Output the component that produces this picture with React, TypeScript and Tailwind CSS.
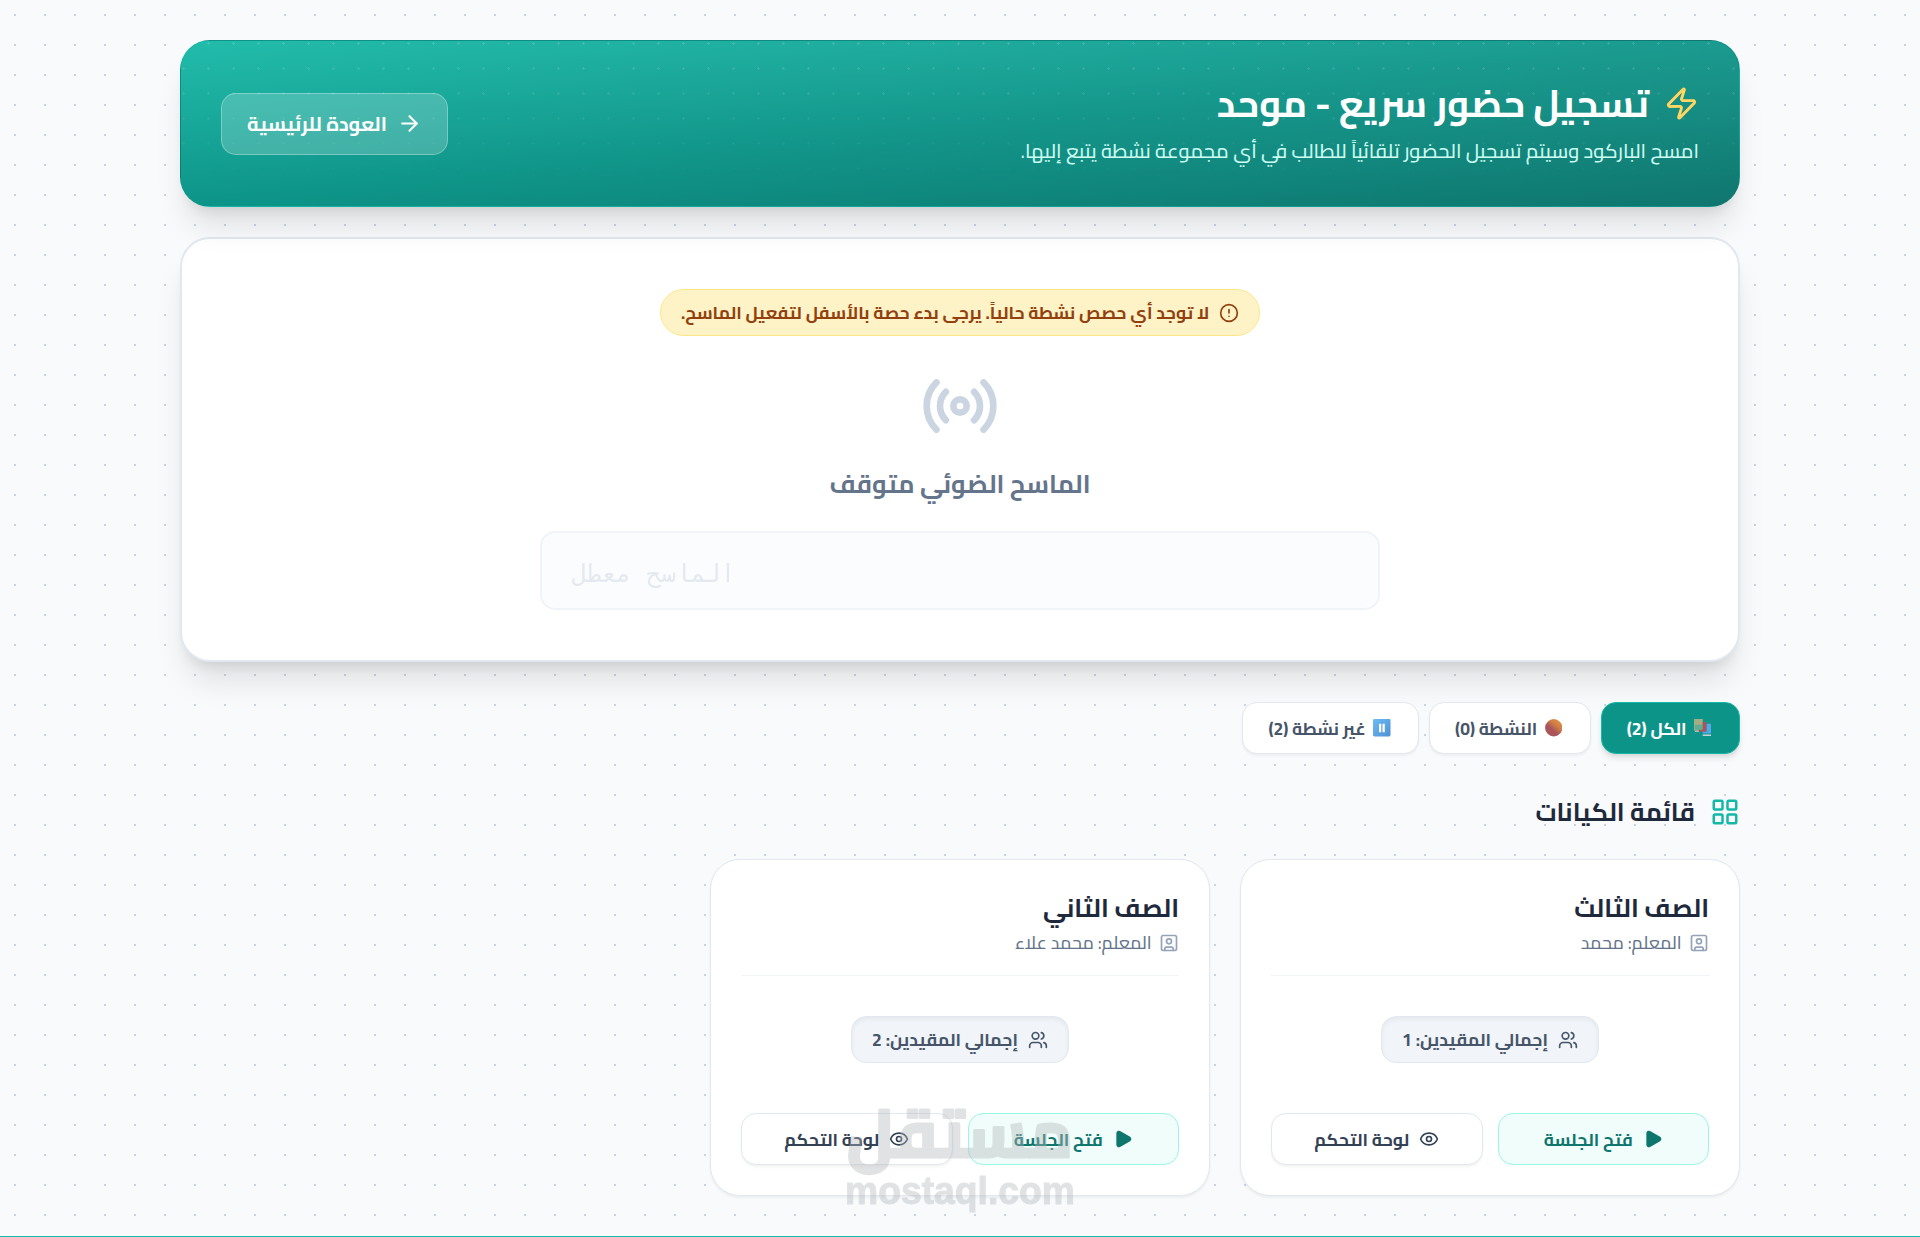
import type { ReactNode } from 'react';
import { ArrowRight, CircleAlert, Eye, LayoutGrid, Play, Radio, SquareUser, Users, Zap } from 'lucide-react';

function BooksEmoji() {
  return (
    <svg viewBox="0 0 18 18" className="ms-0.5 h-3.5 w-3.5 shrink-0">
      <rect x="0" y="0" width="9" height="12" fill="#a3ad84" />
      <rect x="1" y="6" width="8" height="5" fill="#5fae94" />
      <path d="M9 3h4v10H5v-2h4z" fill="#a9545c" />
      <path d="M13 5h4.5v10H9v-2h4z" fill="#53a8ea" />
      <path d="M1 12h4v1H1zM9 16h8.5v1.5H9z" fill="#c9d3d8" />
    </svg>
  );
}

function BallEmoji() {
  return (
    <svg viewBox="0 0 18 18" className="ms-0.5 h-3.5 w-3.5 shrink-0">
      <defs>
        <linearGradient id="ball" x1="0.85" y1="0.1" x2="0.35" y2="0.7">
          <stop offset="0" stopColor="#e09040" />
          <stop offset="0.45" stopColor="#cf7c48" />
          <stop offset="0.85" stopColor="#a9555a" />
        </linearGradient>
      </defs>
      <circle cx="9" cy="9" r="8.9" fill="url(#ball)" />
    </svg>
  );
}

function PauseEmoji() {
  return (
    <svg viewBox="0 0 18 18" className="ms-0.5 h-3.5 w-3.5 shrink-0">
      <defs>
        <linearGradient id="pause" x1="0" y1="0" x2="1" y2="1">
          <stop offset="0" stopColor="#6bbcf5" />
          <stop offset="1" stopColor="#508fd4" />
        </linearGradient>
      </defs>
      <rect width="18" height="18" rx="1.5" fill="url(#pause)" />
      <path d="M6.2 4.8h2.3v8.8H6.2zM9.8 4.8h2.3v8.8H9.8z" fill="#fff" />
    </svg>
  );
}

function Tab({ icon, label, active = false }: { icon: ReactNode; label: string; active?: boolean }) {
  return (
    <button
      className={
        'flex items-center gap-1.5 rounded-xl border px-5 py-2.5 text-sm font-bold ' +
        (active
          ? 'border-[#14b8a6] bg-[#0d9488] text-white shadow-md'
          : 'border-[#e2e8f0] bg-white text-[#475569] shadow-[0_1px_2px_rgba(0,0,0,0.05)]')
      }
    >
      {icon}
      <span>{label}</span>
    </button>
  );
}

function ClassCard({ name, teacher, count }: { name: string; teacher: string; count: number }) {
  return (
    <article className="rounded-3xl border border-[#e2e8f0] bg-white p-6 shadow-[0_1px_2px_rgba(0,0,0,0.05)]">
      <div className="border-b border-[#f1f5f9] pb-4">
        <h3 className="text-xl font-bold text-[#1e293b]">{name}</h3>
        <p className="mt-1 flex items-center gap-1.5 text-sm font-medium text-[#64748b]">
          <SquareUser size={16} className="text-[#94a3b8]" />
          <span>المعلم: {teacher}</span>
        </p>
      </div>
      <div className="mt-8 mb-10 flex justify-center">
        <div className="flex items-center gap-2 rounded-xl border border-[#e2e8f0] bg-[#f1f5f9] px-4 py-2 text-sm font-bold text-[#475569] shadow-[inset_0_2px_4px_rgba(0,0,0,0.05)]">
          <Users size={16} />
          <span>إجمالي المقيدين: {count}</span>
        </div>
      </div>
      <div className="grid grid-cols-2 gap-3">
        <button className="flex items-center justify-center gap-2 rounded-xl border border-[#99f6e4] bg-[#f0fdfa] py-2.5 text-sm font-bold text-[#0f766e]">
          <Play size={16} fill="currentColor" />
          <span>فتح الجلسة</span>
        </button>
        <button className="flex items-center justify-center gap-2 rounded-xl border border-[#e2e8f0] bg-white py-2.5 text-sm font-bold text-[#334155] shadow-[0_1px_2px_rgba(0,0,0,0.05)]">
          <Eye size={16} />
          <span>لوحة التحكم</span>
        </button>
      </div>
    </article>
  );
}

function Watermark() {
  return (
    <svg
      viewBox="0 0 240 125"
      direction="ltr"
      className="pointer-events-none absolute top-[876px] left-[672px] h-[100px] w-[192px] overflow-visible opacity-40"
      fill="#b4b8bb"
      stroke="#b4b8bb"
      strokeLinejoin="round"
    >
      <text
        x="120"
        y="62"
        textAnchor="middle"
        textLength="226"
        lengthAdjust="spacingAndGlyphs"
        strokeWidth="3"
        className="font-['Cairo'] text-[66px] font-bold"
      >
        مستقل
      </text>
      <text
        x="120"
        y="108.5"
        textAnchor="middle"
        textLength="230"
        lengthAdjust="spacingAndGlyphs"
        strokeWidth="1"
        className="font-['Liberation_Sans'] text-[38px] font-bold"
      >
        mostaql.com
      </text>
    </svg>
  );
}

export default function App() {
  return (
    <div
      dir="rtl"
      className="relative flex h-[989.6px] flex-col overflow-hidden bg-[#f8fafc] bg-[radial-gradient(#cbd5e1_1px,transparent_1px)] bg-[length:24px_24px] font-['Cairo',sans-serif] text-[#1e293b] [zoom:1.25]"
    >
      <main className="mx-auto w-full max-w-7xl flex-1 px-4 pt-8">
        <header className="relative mb-6 overflow-hidden rounded-3xl border border-transparent bg-linear-to-br from-[#14b8a6] via-[#0d9488] to-[#0f766e] p-8 shadow-xl">
          <div className="absolute inset-0 bg-[radial-gradient(circle_at_2px_2px,rgba(255,255,255,0.15)_1px,transparent_0)] mask-b-from-0% mask-b-to-90% bg-[length:20px_20px]" />
          <div className="absolute inset-0 bg-linear-to-b from-white/6 to-transparent" />
          <div className="relative flex items-center justify-between">
            <div>
              <h1 className="mb-2 flex items-center gap-3 text-3xl font-bold text-white">
                <Zap size={28} className="text-[#fdd663]" />
                <span>تسجيل حضور سريع - موحد</span>
              </h1>
              <p className="text-base font-medium text-[#ccfbf1]">
                امسح الباركود وسيتم تسجيل الحضور تلقائياً للطالب في أي مجموعة نشطة يتبع إليها.
              </p>
            </div>
            <button className="flex items-center gap-2 rounded-xl border border-white/30 bg-white/20 px-5 py-3 text-base font-bold text-white">
              <ArrowRight size={20} />
              <span>العودة للرئيسية</span>
            </button>
          </div>
        </header>

        <section className="mb-8 flex flex-col items-center rounded-3xl border-2 border-[#e2e8f0] bg-white p-10 shadow-xl">
          <div className="mb-6 flex items-center gap-2 rounded-full border border-[#fde68a] bg-[#fef3c7] px-4 py-2 text-sm font-bold text-[#92400e]">
            <CircleAlert size={16} />
            <span>لا توجد أي حصص نشطة حالياً. يرجى بدء حصة بالأسفل لتفعيل الماسح.</span>
          </div>
          <Radio size={64} className="mb-4 text-[#cbd5e1]" />
          <h2 className="mb-6 text-xl font-bold text-[#64748b]">الماسح الضوئي متوقف</h2>
          <div
            dir="ltr"
            className="w-full max-w-2xl rounded-xl border-2 border-[#e2e8f0] bg-[#f8fafc] px-6 pt-[18px] pb-[14px] text-left font-['DejaVu_Sans_Mono',monospace] text-[19.75px] leading-7 text-[#cbd5e1] opacity-50"
          >
            الماسح معطل
          </div>
        </section>

        <nav className="mb-8 flex gap-2">
          <Tab active icon={<BooksEmoji />} label="الكل (2)" />
          <Tab icon={<BallEmoji />} label="النشطة (0)" />
          <Tab icon={<PauseEmoji />} label="غير نشطة (2)" />
        </nav>

        <h2 className="mb-6 flex items-center gap-3 text-xl font-bold text-[#1e293b]">
          <LayoutGrid size={24} className="text-[#14b8a6]" />
          <span>قائمة الكيانات</span>
        </h2>

        <div className="grid grid-cols-3 gap-6">
          <ClassCard name="الصف الثالث" teacher="محمد" count={1} />
          <ClassCard name="الصف الثاني" teacher="محمد علاء" count={2} />
        </div>
      </main>
      <div className="h-[0.8px] w-full bg-[#14b8a6]" />
      <Watermark />
    </div>
  );
}
